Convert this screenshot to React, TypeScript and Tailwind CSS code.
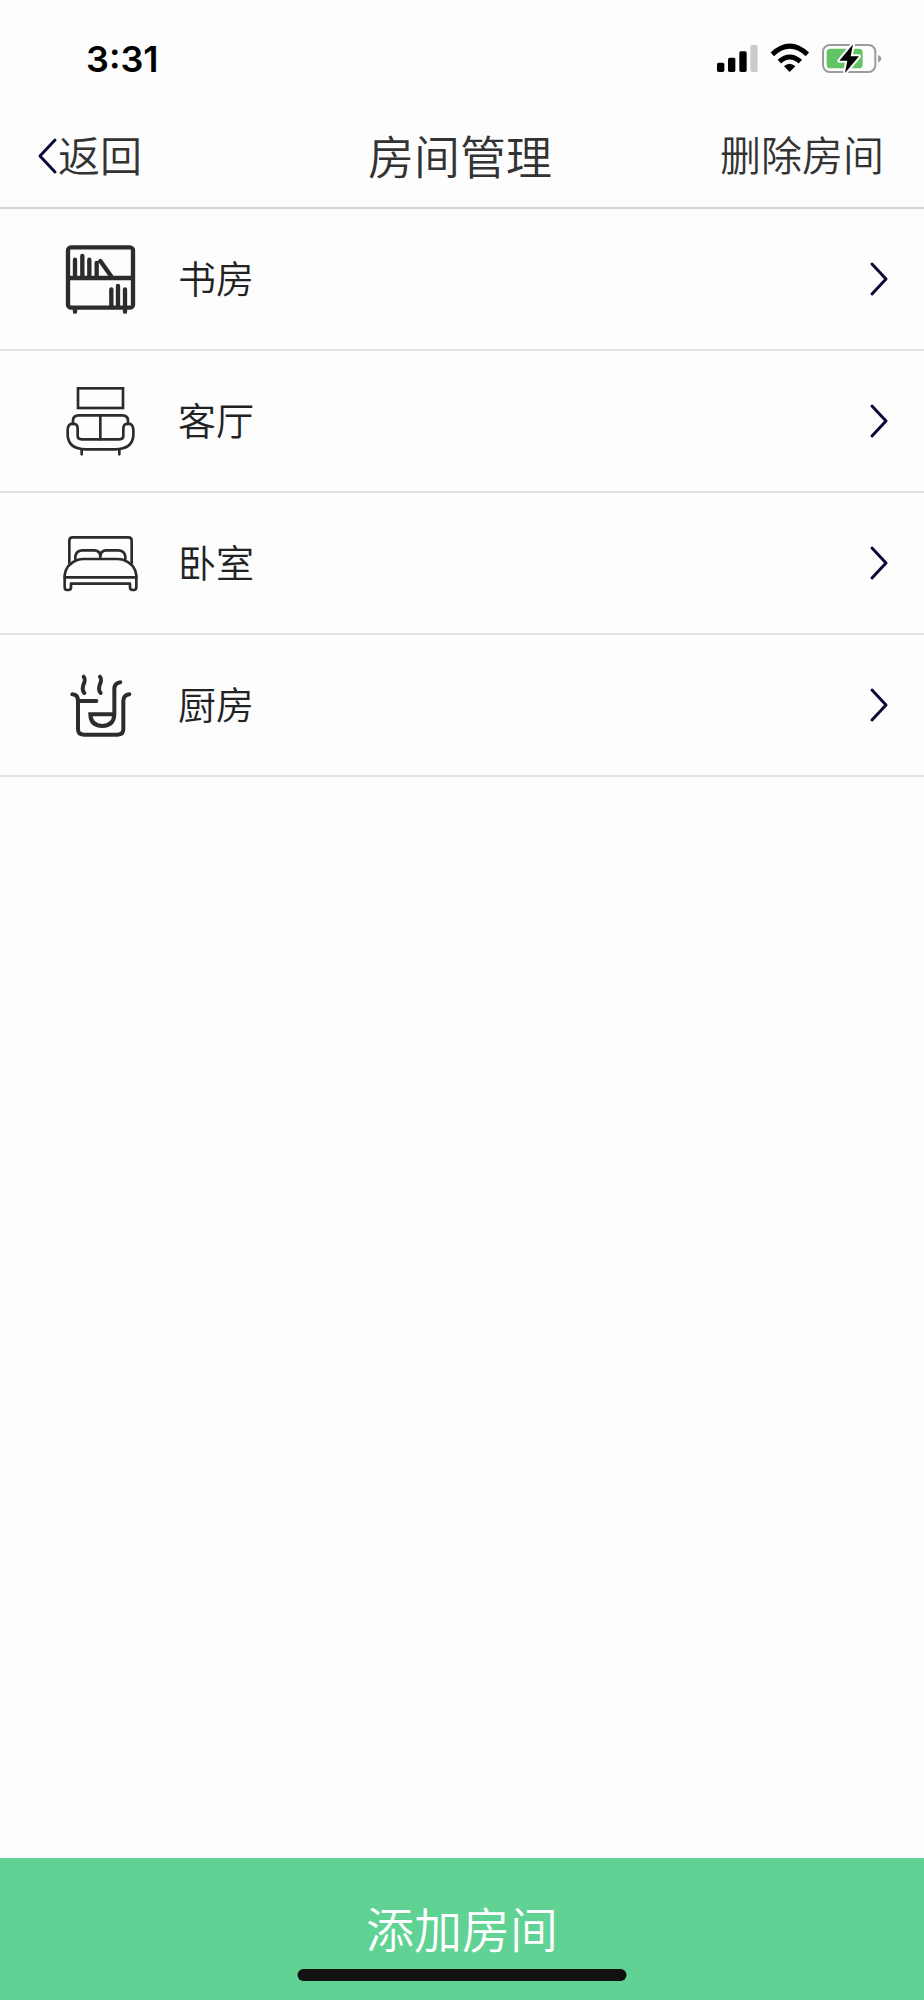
import type { ReactNode } from "react";

const STROKE = {
  fill: "none",
  stroke: "currentColor",
  strokeLinecap: "round",
  strokeLinejoin: "round",
} as const;

function RoomIcon({ children, strokeWidth }: { children: ReactNode; strokeWidth: number }) {
  return (
    <svg
      viewBox="30 27 240 240"
      className="size-20 shrink-0 text-[#2c2c2c]"
      strokeWidth={strokeWidth}
      aria-hidden="true"
      {...STROKE}
    >
      {children}
    </svg>
  );
}

function StudyIcon() {
  return (
    <RoomIcon strokeWidth={13}>
      <rect x="54" y="52" width="195" height="181" rx="9" />
      <path d="M54 144H249M75 238v7M225 238v7" />
      <path d="M75 140V89M97 140V78M118 140V89M140 140V99M151 93L183 138" />
      <path d="M184 230V178M204 230V168M225 230V178" />
    </RoomIcon>
  );
}

function LivingRoomIcon() {
  return (
    <RoomIcon strokeWidth={8}>
      <rect x="84" y="49" width="135" height="59" strokeLinejoin="miter" />
      <path d="M69 156V146Q69 130 86 130H217Q234 130 234 146V156" />
      <path d="M151 130V202" />
      <path d="M83 192V169Q83 155 68 155Q54 156 53 172V191Q56 231 107 232H196Q247 231 250 191V172Q249 156 235 155Q220 155 220 169V192Q220 202 208 202H95Q83 202 83 192Z" />
      <path d="M95 232V247M208 232V247" />
    </RoomIcon>
  );
}

function BedroomIcon() {
  return (
    <RoomIcon strokeWidth={8}>
      <path d="M58 147V80Q58 70 68 70H235Q245 70 245 80V147" />
      <path d="M76 135V127Q79 109 98 109H135Q151 110 151 130Q151 110 167 109H204Q223 109 226 127V135" />
      <path d="M44 190V184Q48 149 84 137Q90 135 100 135H202Q212 135 219 137Q255 149 259 184V190" />
      <path d="M44 190H259V220Q259 228 251 228H248Q240 228 240 220V209H63V220Q63 228 55 228H51Q44 228 44 220Z" />
    </RoomIcon>
  );
}

function KitchenIcon() {
  return (
    <RoomIcon strokeWidth={12}>
      <path d="M101 62Q106 68 104 76Q98 91 98 98Q98 105 103 111" />
      <path d="M150 62Q155 68 153 76Q147 91 147 98Q147 105 152 111" />
      <path d="M67 115Q84 116 84 134V220Q84 236 101 236H203Q220 236 220 220V134Q221 117 238 115" />
      <path d="M84 135H139" />
      <path d="M211 79Q193 81 193 100V176Q191 209 157 210Q122 209 121 175H193" strokeLinejoin="miter" />
    </RoomIcon>
  );
}

const ROOMS = [
  { name: "书房", icon: <StudyIcon /> },
  { name: "客厅", icon: <LivingRoomIcon /> },
  { name: "卧室", icon: <BedroomIcon /> },
  { name: "厨房", icon: <KitchenIcon /> },
];

function StatusBar() {
  return (
    <div className="flex h-[104px] items-center justify-between pt-[14px] pr-10 pl-[86px]">
      <span className="font-[Inter,sans-serif] text-4xl font-semibold text-black">3:31</span>
      <svg viewBox="45 36 504 102" className="h-[34px] w-[168px]" aria-hidden="true">
        <rect x="48" y="98" width="22" height="28" rx="5" />
        <rect x="81" y="83" width="22" height="43" rx="5" />
        <rect x="115" y="64" width="22" height="62" rx="5" />
        <rect x="148" y="45" width="22" height="81" rx="5" fill="#cbcbcb" />
        <g fill="none" stroke="#000" strokeWidth="15">
          <path d="M214 73Q266 24 319 73" />
          <path d="M235 95Q266 67 298 95" />
        </g>
        <path d="M249 109Q266 94 283 109L266 126Z" />
        <rect x="366" y="45" width="157" height="81" rx="20" fill="none" stroke="#9c9c9c" strokeWidth="6" />
        <path d="M531 75Q541 79 541 86Q541 93 531 97Z" fill="#9c9c9c" />
        <rect x="377" y="56" width="108" height="59" rx="11" fill="#63c466" />
        <path
          d="M456 43L415 92H439L432 129L474 79H449Z"
          fill="#000"
          stroke="#fff"
          strokeWidth="12"
          strokeLinejoin="round"
          paintOrder="stroke"
        />
      </svg>
    </div>
  );
}

export default function App() {
  return (
    <div className="flex min-h-screen flex-col bg-[#fdfdfd] font-['Noto_Sans_CJK_SC',sans-serif] font-[350] text-[#222]">
      <StatusBar />

      <header className="grid h-[105px] grid-cols-[1fr_auto_1fr] items-center border-b-2 border-[#d4d4d4] pr-10 pl-9 text-[#333]">
        <button type="button" className="flex items-center justify-self-start text-[42px] leading-none">
          <svg viewBox="0 0 22 40" className="h-10 w-[22px] text-[#0a0a38]" strokeWidth="3" aria-hidden="true" {...STROKE}>
            <path d="M19 4L4 20L19 36" />
          </svg>
          <span className="pb-1">返回</span>
        </button>
        <h1 className="pb-1 text-[46px] leading-none">房间管理</h1>
        <button type="button" className="justify-self-end pb-1 text-[41px] leading-none">
          删除房间
        </button>
      </header>

      <ul className="flex-1">
        {ROOMS.map(({ name, icon }) => (
          <li key={name} className="border-b-2 border-[#e2e2e2]">
            <button type="button" className="flex h-[140px] w-full items-center pr-[34px] pl-[60px] text-left">
              {icon}
              <span className="ml-[38px] flex-1 pb-1 text-[38px] leading-none">{name}</span>
              <svg viewBox="0 0 22 40" className="h-10 w-[22px] text-[#0a0a38]" strokeWidth="3" aria-hidden="true" {...STROKE}>
                <path d="M4 5L18 20L4 35" />
              </svg>
            </button>
          </li>
        ))}
      </ul>

      <div className="relative">
        <button type="button" className="h-[142px] w-full bg-[#60d293] pb-1 text-5xl leading-none text-white">
          添加房间
        </button>
        <div className="absolute bottom-[19px] left-1/2 h-3 w-[329px] -translate-x-1/2 rounded-full bg-[#111]" />
      </div>
    </div>
  );
}
